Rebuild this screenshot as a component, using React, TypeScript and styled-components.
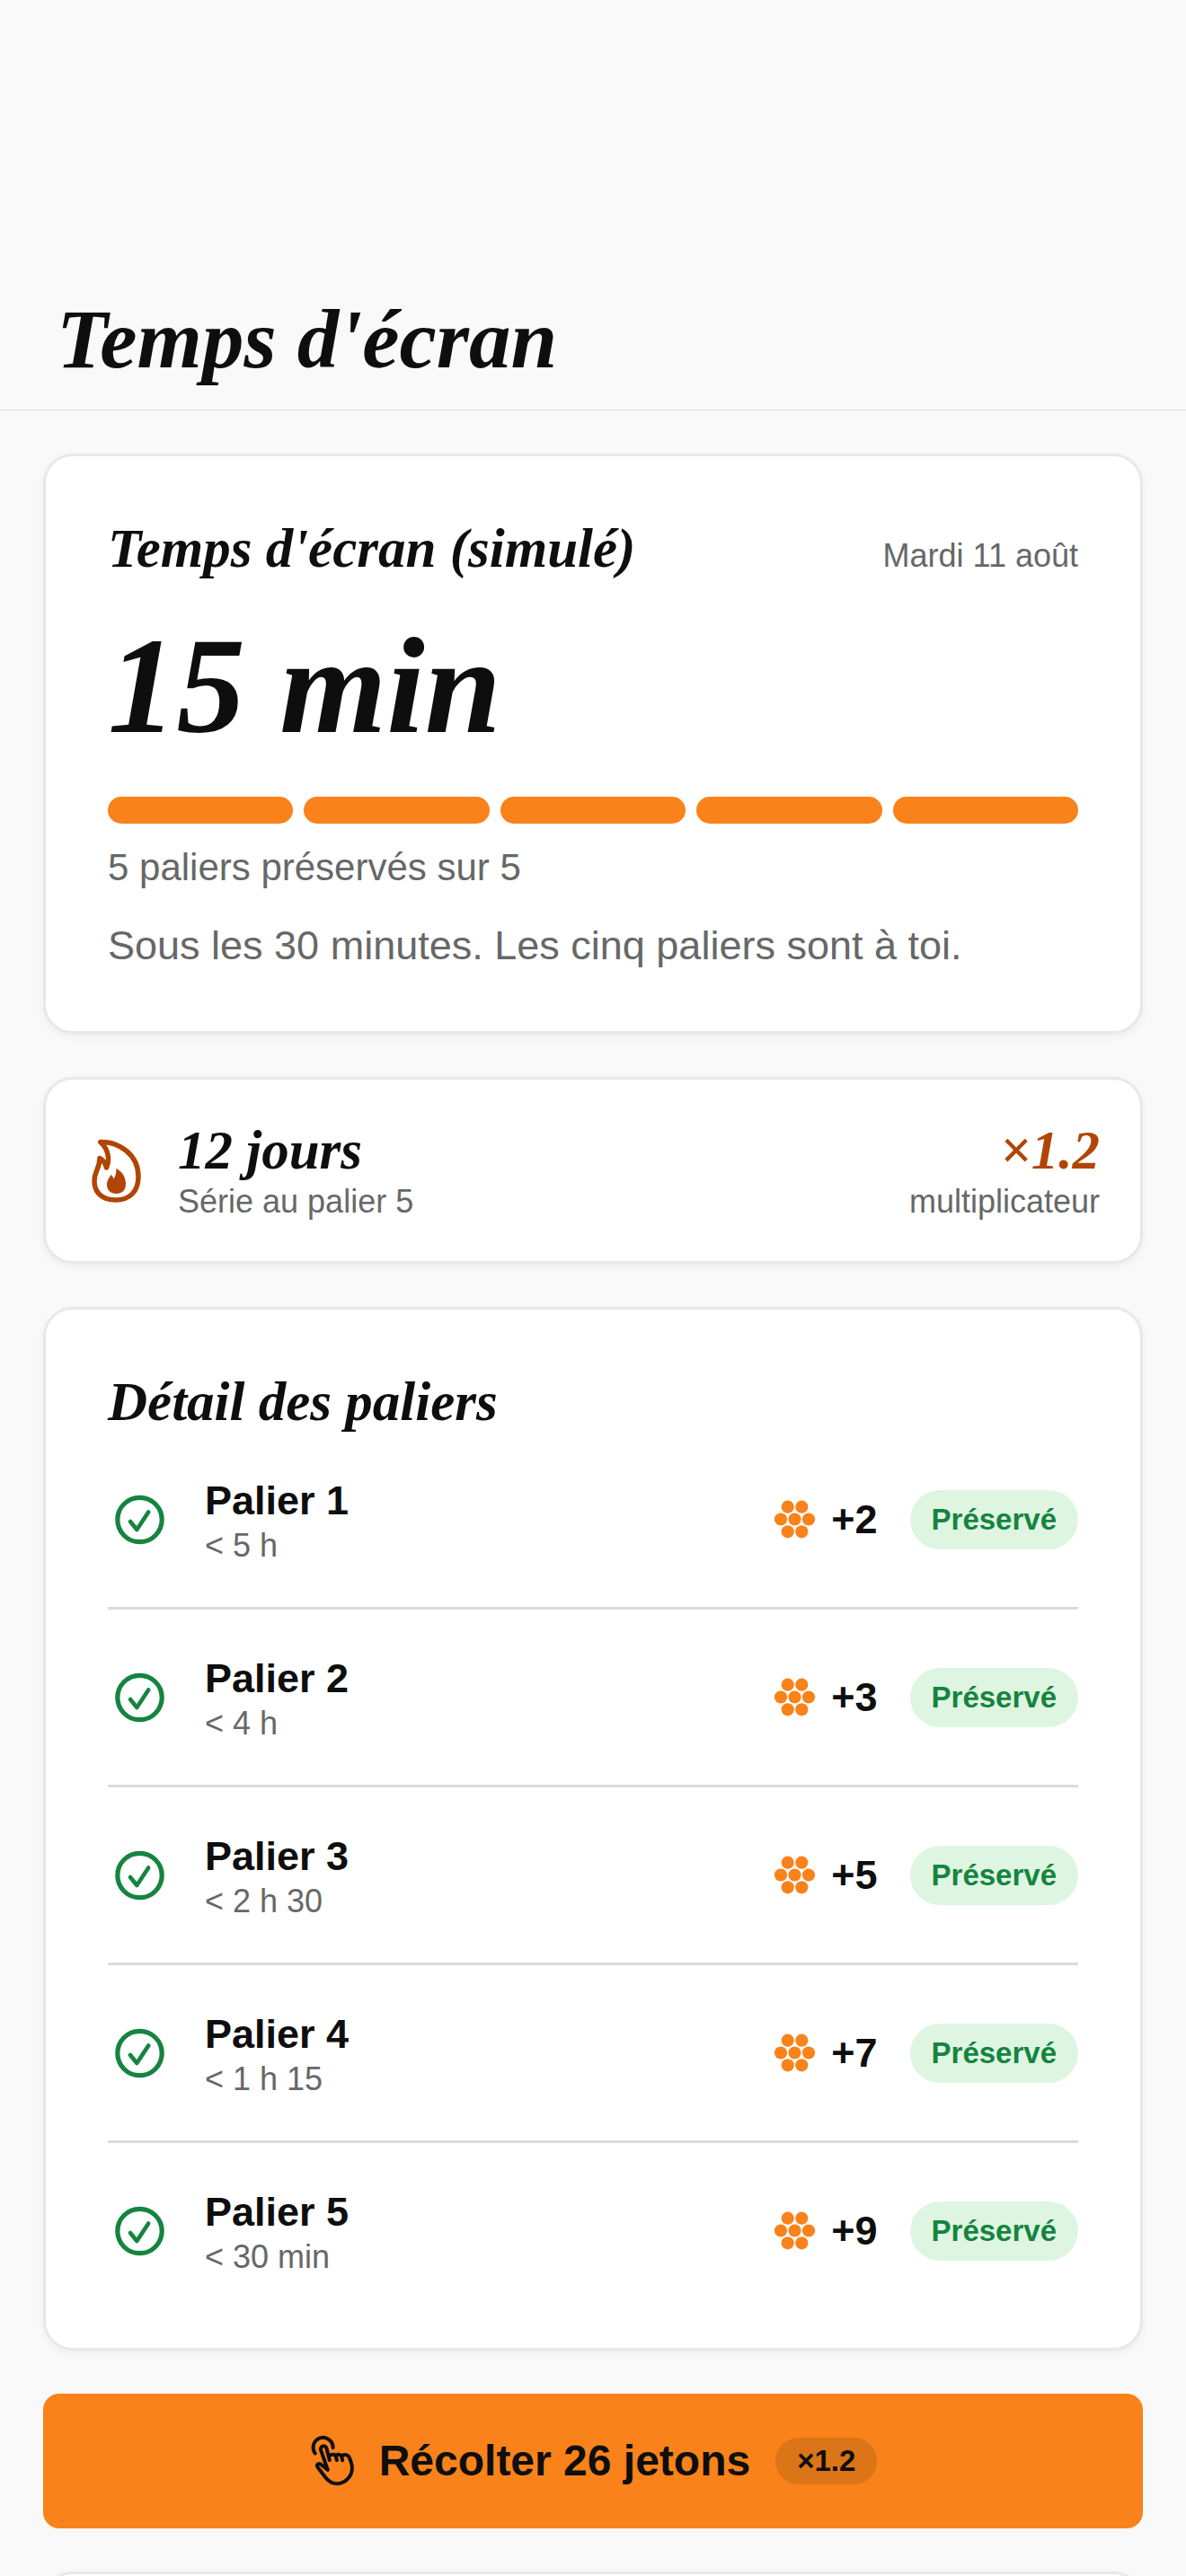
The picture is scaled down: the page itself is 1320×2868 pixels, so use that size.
import React from "react";
import styled, { createGlobalStyle } from "styled-components";

const color = {
  page: "#f9f9f9",
  card: "#ffffff",
  cardBorder: "#e8e8e7",
  line: "#dbdbdb",
  ink: "#0e0e0e",
  muted: "#666867",
  orange: "#f9821a",
  rust: "#b04505",
  green: "#15843f",
  greenSoft: "#def6e1",
};

const serif = `"Liberation Serif", "Times New Roman", serif`;
const sans = `"Liberation Sans", Arial, sans-serif`;

const GlobalStyle = createGlobalStyle`
  *, *::before, *::after { box-sizing: border-box; }
  body {
    margin: 0;
    background: ${color.page};
    color: ${color.ink};
    font-family: ${sans};
  }
  h1, h2, p, ul { margin: 0; padding: 0; }
  svg { display: block; flex: none; overflow: visible; }
`;

const Screen = styled.div`
  height: 100vh;
  overflow-y: auto;
  scrollbar-width: none;
`;

const Header = styled.header`
  padding: 324px 63px 24px;
  border-bottom: 1px solid ${color.line};
`;

const PageTitle = styled.h1`
  font: italic 700 93px/108px ${serif};
`;

const Content = styled.main`
  display: flex;
  flex-direction: column;
  gap: 48px;
  padding: 48px;
`;

const Card = styled.section`
  padding: 69px;
  background: ${color.card};
  border: 3px solid ${color.cardBorder};
  border-radius: 33px;
  box-shadow: 0 3px 9px rgba(0, 0, 0, 0.05);
`;

const StreakCard = styled(Card)`
  display: flex;
  align-items: center;
  gap: 36px;
  padding: 45px;
`;

const CardHead = styled.div`
  display: flex;
  align-items: baseline;
  justify-content: space-between;
  gap: 36px;
`;

const Heading = styled.h2<{ $color?: string }>`
  font: italic 700 61px/67px ${serif};
  color: ${(p) => p.$color ?? color.ink};
`;

const Muted = styled.p`
  font-size: 36px;
  line-height: 42px;
  color: ${color.muted};
`;

const BigTime = styled.p`
  margin: 36px 0 39px;
  font: italic 700 153px/168px ${serif};
`;

const Segments = styled.div`
  display: flex;
  gap: 12px;
  margin-bottom: 24px;
`;

const Segment = styled.span`
  flex: 1;
  height: 30px;
  border-radius: 15px;
  background: ${color.orange};
`;

const SegmentCaption = styled.p`
  margin-bottom: 36px;
  font-size: 42px;
  line-height: 50px;
  color: ${color.muted};
`;

const Message = styled.p`
  font-size: 45px;
  line-height: 52px;
  color: ${color.muted};
`;

const StreakText = styled.div<{ $end?: boolean }>`
  display: flex;
  flex-direction: column;
  gap: 3px;
  ${(p) => (p.$end ? "margin-left: auto; text-align: right;" : "")}
`;

const TierList = styled.ul`
  margin-top: 36px;
  list-style: none;
`;

const TierRow = styled.li`
  display: flex;
  align-items: center;
  gap: 36px;
  min-height: 123px;

  & + & {
    margin-top: 36px;
    padding-top: 36px;
    border-top: 3px solid ${color.line};
    min-height: 162px;
  }
`;

const TierText = styled.div`
  flex: 1;
`;

const TierName = styled.p`
  font-size: 45px;
  font-weight: 700;
  line-height: 58px;
`;

const Reward = styled.span`
  display: flex;
  align-items: center;
  gap: 18px;
  font-size: 45px;
  font-weight: 700;
`;

const StatusBadge = styled.span`
  padding: 0 24px;
  border-radius: 33px;
  background: ${color.greenSoft};
  color: ${color.green};
  font-size: 33px;
  font-weight: 700;
  line-height: 66px;
`;

const HarvestButton = styled.button`
  display: flex;
  align-items: center;
  justify-content: center;
  gap: 28px;
  width: 100%;
  min-height: 150px;
  border: 0;
  border-radius: 18px;
  background: ${color.orange};
  color: ${color.ink};
  font: 700 48px/58px ${sans};
  cursor: pointer;
`;

const Multiplier = styled.span`
  padding: 0 24px;
  border-radius: 26px;
  background: rgba(14, 14, 14, 0.12);
  font-size: 33px;
  line-height: 52px;
`;

const FlameIcon = () => (
  <svg width="66" height="72" viewBox="0 0 66 72" fill="none" aria-hidden="true">
    <path
      d="M15.7 4.5C36 4 58 18 58 43C58 60 48 69 32.5 69C17 69 9 60 9 48C9 37 15 34 15 22.5C18.5 24 21 28 22.5 33C26 25 25.5 13 15.7 4.5Z"
      stroke={color.rust}
      strokeWidth="5.5"
      strokeLinejoin="round"
    />
    <path
      d="M33.3 34C40 37 44 44 44 51C44 58 40 62 33.5 62C27 62 23 58 23 52C23 47 25.5 44.5 27.3 41C29 42 30 43.5 30.5 45.5C33 42 33.5 38 33.3 34Z"
      fill={color.rust}
    />
  </svg>
);

const CheckIcon = () => (
  <svg width="72" height="72" viewBox="0 0 72 72" fill="none" stroke={color.green} aria-hidden="true">
    <circle cx="35.5" cy="36" r="24.7" strokeWidth="5.2" />
    <path d="M25 38L32.3 47L45.2 27.5" strokeWidth="4.6" strokeLinecap="round" strokeLinejoin="round" />
  </svg>
);

const tokenDots = [
  [14.7, 8.7],
  [30.3, 8.7],
  [7, 22.5],
  [22.5, 22.5],
  [38, 22.5],
  [14.7, 36.3],
  [30.3, 36.3],
];

const TokenIcon = () => (
  <svg width="45" height="45" viewBox="0 0 45 45" fill={color.orange} aria-hidden="true">
    {tokenDots.map(([x, y]) => (
      <circle key={`${x}-${y}`} cx={x} cy={y} r="7.1" />
    ))}
  </svg>
);

const TapIcon = () => (
  <svg
    width="50"
    height="60"
    viewBox="0 0 50 60"
    fill="none"
    stroke={color.ink}
    strokeWidth="4"
    strokeLinecap="round"
    strokeLinejoin="round"
    aria-hidden="true"
  >
    <path d="M6.8 21.5A11 11 0 1 1 26.6 15" />
    <path d="M22.8 29L19.5 16C18.3 11.6 11.9 13 13 17.6L20.8 40L13.6 34C10.6 31.6 7.8 34.2 9.6 37L18.5 48.5C24 55.5 32 57 39 53C47 48 49.5 40 46.8 31.5L45 26.5C43.8 23.2 40.5 22.2 36.4 24" />
    <path d="M22 24.4C25.5 22 29 22.2 29.7 24.6L30.9 29" />
    <path d="M29.9 24C33 22 35.6 22.8 36.2 25L37.2 29.3" />
  </svg>
);

const tiers = [
  { name: "Palier 1", limit: "< 5 h", reward: "+2" },
  { name: "Palier 2", limit: "< 4 h", reward: "+3" },
  { name: "Palier 3", limit: "< 2 h 30", reward: "+5" },
  { name: "Palier 4", limit: "< 1 h 15", reward: "+7" },
  { name: "Palier 5", limit: "< 30 min", reward: "+9" },
];

export default function App() {
  return (
    <Screen>
      <GlobalStyle />
      <Header>
        <PageTitle>Temps d'écran</PageTitle>
      </Header>
      <Content>
        <Card>
          <CardHead>
            <Heading>Temps d'écran (simulé)</Heading>
            <Muted>Mardi 11 août</Muted>
          </CardHead>
          <BigTime>15 min</BigTime>
          <Segments>
            {tiers.map((tier) => (
              <Segment key={tier.name} />
            ))}
          </Segments>
          <SegmentCaption>5 paliers préservés sur 5</SegmentCaption>
          <Message>Sous les 30 minutes. Les cinq paliers sont à toi.</Message>
        </Card>

        <StreakCard>
          <FlameIcon />
          <StreakText>
            <Heading>12 jours</Heading>
            <Muted>Série au palier 5</Muted>
          </StreakText>
          <StreakText $end>
            <Heading as="p" $color={color.rust}>×1.2</Heading>
            <Muted>multiplicateur</Muted>
          </StreakText>
        </StreakCard>

        <Card>
          <Heading>Détail des paliers</Heading>
          <TierList>
            {tiers.map((tier) => (
              <TierRow key={tier.name}>
                <CheckIcon />
                <TierText>
                  <TierName>{tier.name}</TierName>
                  <Muted>{tier.limit}</Muted>
                </TierText>
                <Reward>
                  <TokenIcon />
                  {tier.reward}
                </Reward>
                <StatusBadge>Préservé</StatusBadge>
              </TierRow>
            ))}
          </TierList>
        </Card>

        <HarvestButton type="button">
          <TapIcon />
          Récolter 26 jetons
          <Multiplier>×1.2</Multiplier>
        </HarvestButton>

        <Card />
      </Content>
    </Screen>
  );
}
